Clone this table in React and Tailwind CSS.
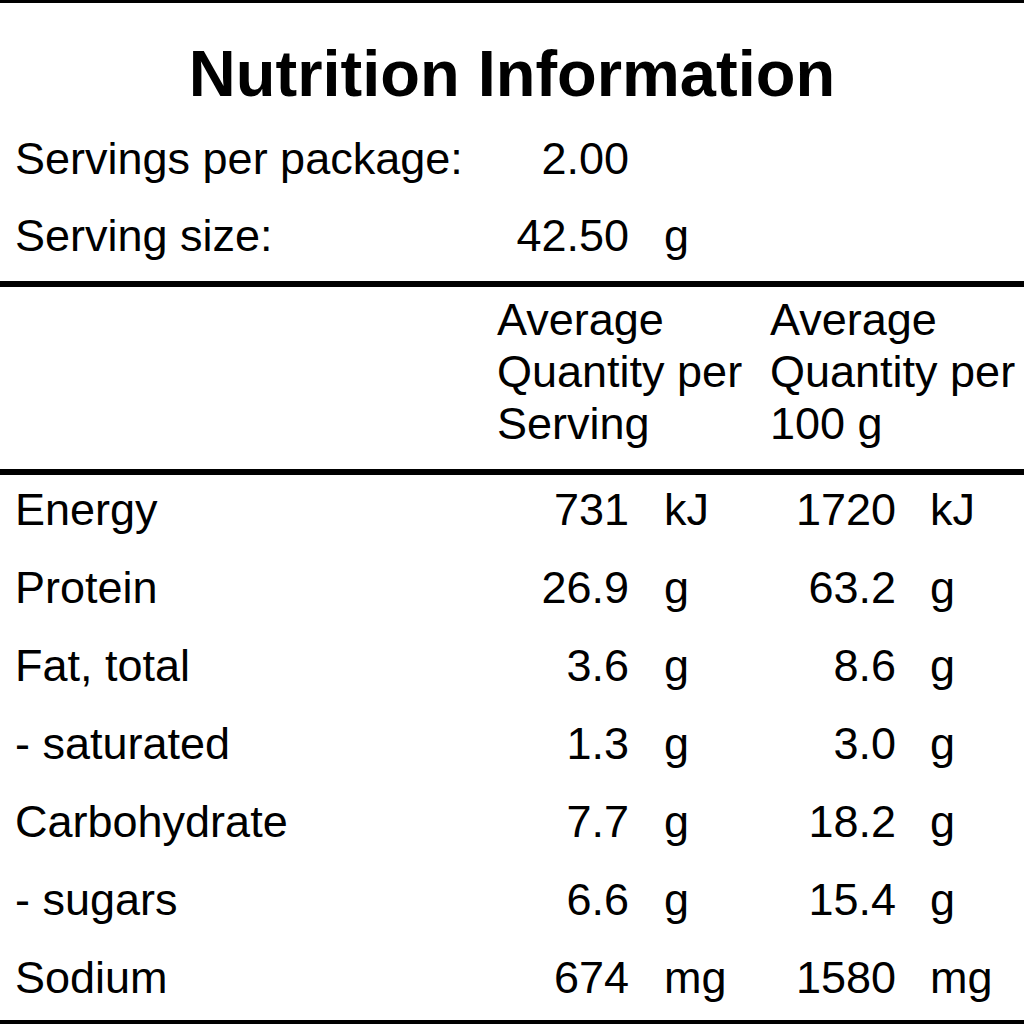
const rows = [
    ["Energy", "731", "kJ", "1720", "kJ"],
    ["Protein", "26.9", "g", "63.2", "g"],
    ["Fat, total", "3.6", "g", "8.6", "g"],
    ["- saturated", "1.3", "g", "3.0", "g"],
    ["Carbohydrate", "7.7", "g", "18.2", "g"],
    ["- sugars", "6.6", "g", "15.4", "g"],
    ["Sodium", "674", "mg", "1580", "mg"],
];

function Row({ label, v1, u1, v2, u2, className }) {
    return (
        <div className={"flex pl-[15px] " + className}>
            <div className="w-[465px] shrink-0">{label}</div>
            <div className="w-[149px] shrink-0 text-right">{v1}</div>
            <div className="w-[107px] shrink-0 ml-[35px]">{u1}</div>
            <div className="w-[125px] shrink-0 text-right">{v2}</div>
            <div className="ml-[34px]">{u2}</div>
        </div>
    );
}

export default function App() {
    return (
        <div
            className="w-[1024px] h-[1024px] overflow-hidden bg-white text-black border-t-[3px] border-black"
            style={{ fontFamily: '"Liberation Sans", Arial, sans-serif' }}
        >
            <div className="mt-[34px] text-center font-bold text-[65px] leading-[74px]">
                Nutrition Information
            </div>

            <div className="mt-[9px] text-[45px] leading-[77px]">
                <Row label="Servings per package:" v1="2.00" u1="" v2="" u2="" className="" />
                <Row label="Serving size:" v1="42.50" u1="g" v2="" u2="" className="" />
            </div>

            <div className="mt-[7px] h-[6px] bg-black"></div>

            <div className="flex pl-[497px] pt-[7px] pb-[19px] text-[45px] leading-[52px]">
                <div className="w-[273px] shrink-0">
                    Average
                    <br />
                    Quantity per
                    <br />
                    Serving
                </div>
                <div>
                    Average
                    <br />
                    Quantity per
                    <br />
                    100 g
                </div>
            </div>

            <div className="h-[6px] bg-black"></div>

            <div className="text-[45px] leading-[70px] border-b-[4px] border-black">
                {rows.map((r, i) => (
                    <Row
                        key={i}
                        label={r[0]}
                        v1={r[1]}
                        u1={r[2]}
                        v2={r[3]}
                        u2={r[4]}
                        className={i === rows.length - 1 ? "pb-[7px]" : "pb-[8px]"}
                    />
                ))}
            </div>
        </div>
    );
}
